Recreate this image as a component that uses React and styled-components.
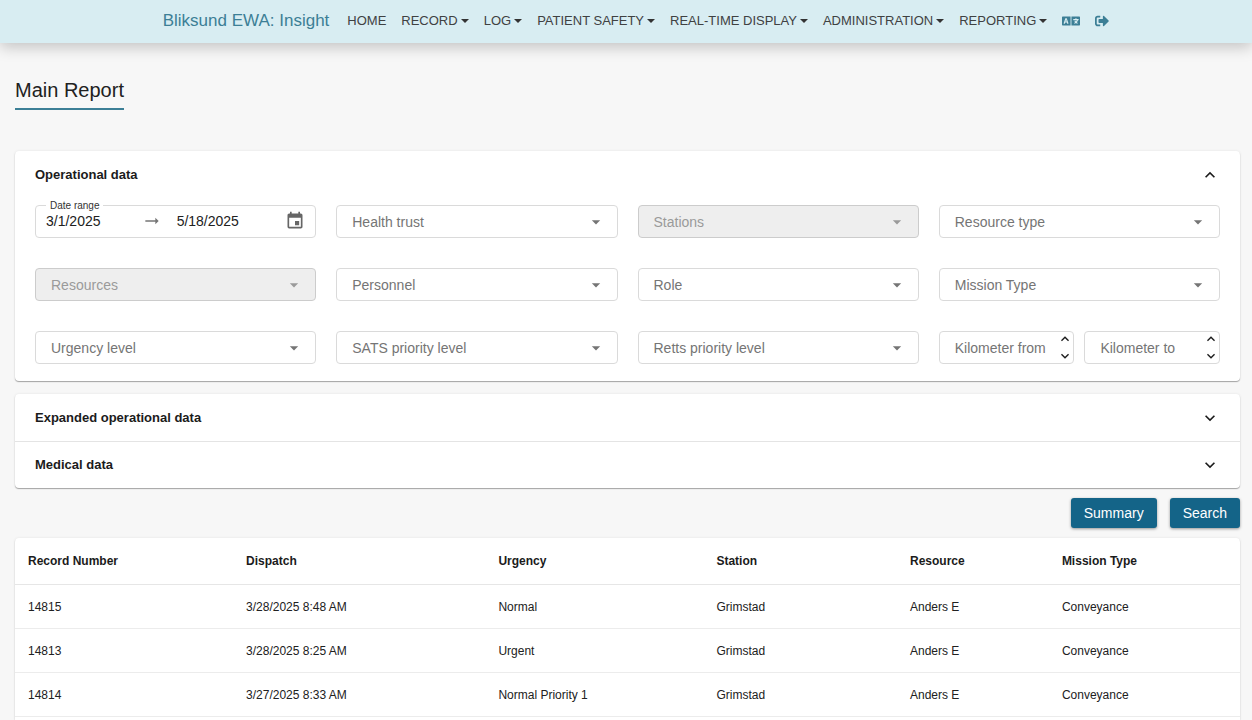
import React, { useId, useState } from "react";
import styled, { createGlobalStyle } from "styled-components";
import { FaLanguage, FaSignOutAlt } from "react-icons/fa";
import {
  MdArrowDropDown,
  MdArrowRightAlt,
  MdEvent,
  MdKeyboardArrowDown,
  MdKeyboardArrowUp,
} from "react-icons/md";

const GlobalStyle = createGlobalStyle`
  *, *::before, *::after { box-sizing: border-box; }
  body {
    margin: 0;
    background: #f7f7f7;
    color: #212121;
    font-family: "Liberation Sans", Arial, sans-serif;
    font-size: 14px;
  }
  button, input, select { font: inherit; color: inherit; }
`;

const Page = styled.div`
  min-height: 100vh;
  display: flex;
  flex-direction: column;
`;

const Header = styled.header`
  height: 43px;
  display: flex;
  align-items: center;
  justify-content: center;
  padding: 0 0 1px 20px;
  background: #d8edf2;
  box-shadow: 0 4px 15px rgba(0, 0, 0, 0.22);
`;

const Brand = styled.a`
  margin-right: 18px;
  font-size: 17px;
  line-height: 24px;
  color: #3c7f96;
  text-decoration: none;
  white-space: nowrap;
`;

const Nav = styled.nav`
  display: flex;
  align-items: center;
  gap: 15px;
`;

const NavLink = styled.a`
  font-size: 13px;
  line-height: 20px;
  color: #3f4142;
  text-decoration: none;
  white-space: nowrap;
`;

const NavMenu = styled.button`
  display: flex;
  align-items: center;
  gap: 3px;
  padding: 0;
  border: 0;
  background: none;
  font-size: 13px;
  line-height: 20px;
  color: #3f4142;
  white-space: nowrap;

  &::after {
    content: "";
    border: 4px solid transparent;
    border-top-color: #333;
    border-bottom: 0;
  }
`;

const NavIcon = styled.button`
  display: flex;
  padding: 0;
  border: 0;
  background: none;
  color: #3c7f96;
`;

const Main = styled.main`
  flex: 1;
  display: flex;
  flex-direction: column;
  padding: 33px 12px 0 15px;
`;

const Title = styled.h1`
  align-self: flex-start;
  margin: 0 0 41px;
  padding-bottom: 4px;
  border-bottom: 2px solid #3c7f96;
  font-size: 20px;
  font-weight: 400;
  line-height: 28px;
`;

const Card = styled.section`
  margin-bottom: ${(p) => p.$gap}px;
  background: #fff;
  border-radius: 4px;
  box-shadow: 0 1px 1px rgba(0, 0, 0, 0.32), 0 0 3px rgba(0, 0, 0, 0.08);
`;

const PanelToggle = styled.button`
  width: 100%;
  height: 47px;
  display: flex;
  align-items: center;
  justify-content: space-between;
  padding: 0 20px;
  border: 0;
  background: none;
  font-size: 13px;
  font-weight: 700;
  line-height: 20px;
  color: #1b1b1b;
  text-align: left;

  & + & {
    border-top: 1px solid #e4e4e4;
  }
`;

const Filters = styled.div`
  display: grid;
  grid-template-columns: repeat(4, minmax(0, 1fr));
  gap: 30px 20px;
  padding: 7px 20px 17px;
`;

const Pair = styled.div`
  display: grid;
  grid-template-columns: repeat(2, minmax(0, 1fr));
  gap: 10px;
`;

const Field = styled.div`
  position: relative;
  display: flex;
  align-items: center;
  height: 33px;
  border: 1px solid ${(p) => (p.$off ? "#cccccc" : "#dadada")};
  border-radius: 4px;
  background: ${(p) => (p.$off ? "#eeeeee" : "#fff")};
  color: ${(p) => (p.$off ? "#9a9a9a" : "#757575")};
`;

const Select = styled.select`
  width: 100%;
  height: 100%;
  padding: 0 34px 0 15px;
  border: 0;
  background: none;
  appearance: none;
  opacity: 1;
`;

const DropIcon = styled(MdArrowDropDown)`
  position: absolute;
  right: 11px;
  pointer-events: none;
`;

const NumberInput = styled.input`
  flex: 1;
  min-width: 0;
  height: 100%;
  padding: 0 0 0 15px;
  border: 0;
  background: none;
  appearance: textfield;

  &::placeholder { color: #757575; opacity: 1; }
  &::-webkit-inner-spin-button { appearance: none; margin: 0; }
`;

const Stepper = styled.div`
  display: flex;
  flex-direction: column;
  gap: 1px;
`;

const Step = styled.button`
  display: flex;
  padding: 0;
  border: 0;
  background: none;
  color: #1b1b1b;
`;

const DateField = styled(Field).attrs({ role: "group" })`
  padding: 0 10px 2px 10px;
`;

const DateLabel = styled.span`
  position: absolute;
  top: -6px;
  left: 10px;
  padding: 0 4px;
  background: #fff;
  font-size: 10px;
  line-height: 12px;
  color: #333;
`;

const DateInput = styled.input`
  flex: 1;
  min-width: 0;
  padding: 0;
  border: 0;
  background: none;
  color: #212121;
`;

const RangeArrow = styled(MdArrowRightAlt)`
  margin-right: 15px;
`;

const CalendarButton = styled.button`
  display: flex;
  margin-left: 13px;
  padding: 0;
  border: 0;
  background: none;
  color: #666;
`;

const Actions = styled.div`
  display: flex;
  justify-content: flex-end;
  gap: 13px;
  margin-bottom: 10px;
`;

const Action = styled.button`
  height: 30px;
  padding: 0 13px;
  border: 0;
  border-radius: 3px;
  background: #146488;
  color: #fff;
  line-height: 30px;
  box-shadow: 0 1px 3px rgba(0, 0, 0, 0.4);
`;

const TableCard = styled(Card)`
  flex: 1;
  border-radius: 4px 4px 0 0;
`;

const Table = styled.table`
  width: 100%;
  table-layout: fixed;
  border-collapse: separate;
  border-spacing: 0;
  font-size: 12px;
  line-height: 20px;
`;

const Col = styled.col`
  width: ${(p) => p.$share}%;
`;

const HeadCell = styled.th`
  height: 47px;
  padding: 0 13px;
  border-bottom: 1px solid #e6e6e6;
  text-align: left;
  color: #1b1b1b;
`;

const Cell = styled.td`
  height: 44px;
  padding: 0 13px;
  border-bottom: 1px solid #ececec;
`;

const menus = ["RECORD", "LOG", "PATIENT SAFETY", "REAL-TIME DISPLAY", "ADMINISTRATION", "REPORTING"];

const selects = [
  { label: "Health trust" },
  { label: "Stations", disabled: true },
  { label: "Resource type" },
  { label: "Resources", disabled: true },
  { label: "Personnel" },
  { label: "Role" },
  { label: "Mission Type" },
  { label: "Urgency level" },
  { label: "SATS priority level" },
  { label: "Retts priority level" },
];

const columns = [
  { name: "Record Number", share: 17.8 },
  { name: "Dispatch", share: 20.6 },
  { name: "Urgency", share: 17.8 },
  { name: "Station", share: 15.8 },
  { name: "Resource", share: 12.4 },
  { name: "Mission Type", share: 15.6 },
];

const records = [
  ["14815", "3/28/2025 8:48 AM", "Normal", "Grimstad", "Anders E", "Conveyance"],
  ["14813", "3/28/2025 8:25 AM", "Urgent", "Grimstad", "Anders E", "Conveyance"],
  ["14814", "3/27/2025 8:33 AM", "Normal Priority 1", "Grimstad", "Anders E", "Conveyance"],
];

function SelectField({ label, disabled }) {
  return (
    <Field $off={disabled}>
      <Select aria-label={label} disabled={disabled} defaultValue="">
        <option value="">{label}</option>
      </Select>
      <DropIcon size={20} aria-hidden="true" />
    </Field>
  );
}

function NumberField({ label }) {
  const [value, setValue] = useState("");
  const step = (by) => setValue((v) => String(Math.max(0, Number(v) + by)));
  return (
    <Field>
      <NumberInput
        type="number"
        min="0"
        aria-label={label}
        placeholder={label}
        value={value}
        onChange={(e) => setValue(e.target.value)}
      />
      <Stepper>
        <Step type="button" aria-label={`Increase ${label}`} onClick={() => step(1)}>
          <MdKeyboardArrowUp size={16} />
        </Step>
        <Step type="button" aria-label={`Decrease ${label}`} onClick={() => step(-1)}>
          <MdKeyboardArrowDown size={16} />
        </Step>
      </Stepper>
    </Field>
  );
}

function DateRange() {
  const id = useId();
  return (
    <DateField aria-labelledby={id}>
      <DateLabel id={id}>Date range</DateLabel>
      <DateInput aria-label="Start date" defaultValue="3/1/2025" />
      <RangeArrow size={20} aria-hidden="true" />
      <DateInput aria-label="End date" defaultValue="5/18/2025" />
      <CalendarButton type="button" aria-label="Open calendar">
        <MdEvent size={20} />
      </CalendarButton>
    </DateField>
  );
}

export default function App() {
  const [open, setOpen] = useState(true);
  return (
    <Page>
      <GlobalStyle />
      <Header>
        <Brand href="#">Bliksund EWA: Insight</Brand>
        <Nav>
          <NavLink href="#">HOME</NavLink>
          {menus.map((m) => (
            <NavMenu key={m} type="button">{m}</NavMenu>
          ))}
          <NavIcon type="button" aria-label="Language"><FaLanguage size={18} /></NavIcon>
          <NavIcon type="button" aria-label="Sign out"><FaSignOutAlt size={14} /></NavIcon>
        </Nav>
      </Header>
      <Main>
        <Title>Main Report</Title>
        <Card $gap={13}>
          <PanelToggle type="button" aria-expanded={open} onClick={() => setOpen(!open)}>
            Operational data
            {open ? <MdKeyboardArrowUp size={20} /> : <MdKeyboardArrowDown size={20} />}
          </PanelToggle>
          {open && (
            <Filters>
              <DateRange />
              {selects.map((s) => (
                <SelectField key={s.label} {...s} />
              ))}
              <Pair>
                <NumberField label="Kilometer from" />
                <NumberField label="Kilometer to" />
              </Pair>
            </Filters>
          )}
        </Card>
        <Card $gap={10}>
          <PanelToggle type="button" aria-expanded={false}>
            Expanded operational data
            <MdKeyboardArrowDown size={20} />
          </PanelToggle>
          <PanelToggle type="button" aria-expanded={false}>
            Medical data
            <MdKeyboardArrowDown size={20} />
          </PanelToggle>
        </Card>
        <Actions>
          <Action type="button">Summary</Action>
          <Action type="button">Search</Action>
        </Actions>
        <TableCard $gap={0}>
          <Table>
            <colgroup>
              {columns.map((c) => <Col key={c.name} $share={c.share} />)}
            </colgroup>
            <thead>
              <tr>{columns.map((c) => <HeadCell key={c.name} scope="col">{c.name}</HeadCell>)}</tr>
            </thead>
            <tbody>
              {records.map((r) => (
                <tr key={r[0]}>{r.map((v, i) => <Cell key={i}>{v}</Cell>)}</tr>
              ))}
            </tbody>
          </Table>
        </TableCard>
      </Main>
    </Page>
  );
}
